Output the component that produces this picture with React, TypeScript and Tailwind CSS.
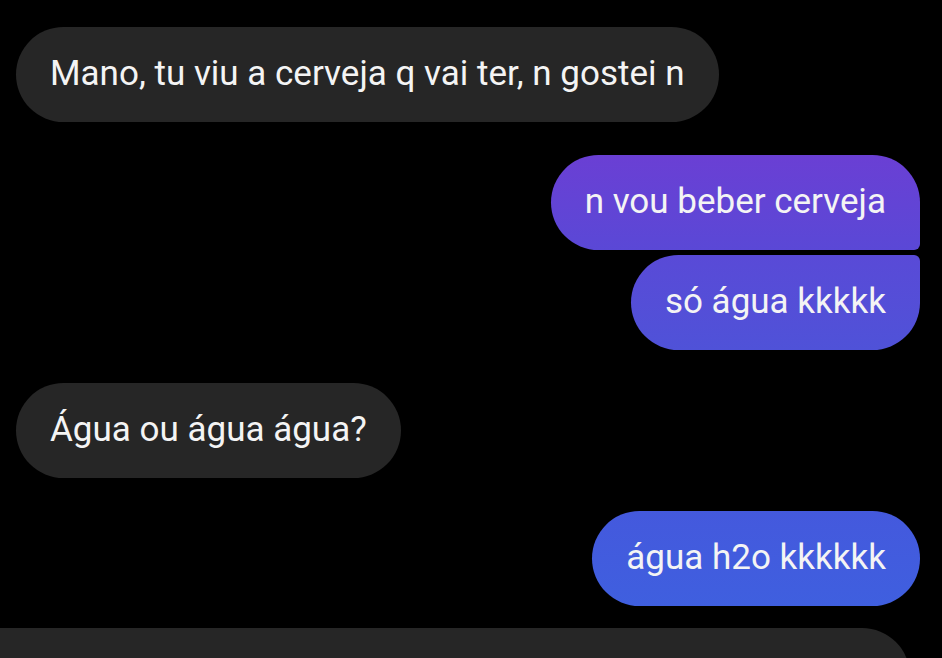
const font = { fontFamily: "Roboto, 'Noto Sans', sans-serif" }

type Msg = { text: string; mine: boolean; shape: string; color: string; top: string }

const messages: Msg[] = [
  { text: "Mano, tu viu a cerveja q vai ter, n gostei n", mine: false, shape: "rounded-[48px]", color: "bg-[#262626]", top: "mt-[27px]" },
  { text: "n vou beber cerveja", mine: true, shape: "rounded-[48px] rounded-br-[6px]", color: "bg-gradient-to-b from-[#6a3fd4] to-[#5a48d6]", top: "mt-[33px]" },
  { text: "só água kkkkk", mine: true, shape: "rounded-[48px] rounded-tr-[6px]", color: "bg-gradient-to-b from-[#594ad7] to-[#4f52d8]", top: "mt-[5px]" },
  { text: "Água ou água água?", mine: false, shape: "rounded-[48px]", color: "bg-[#262626]", top: "mt-[33px]" },
  { text: "água h2o kkkkkk", mine: true, shape: "rounded-[48px]", color: "bg-gradient-to-b from-[#4459dd] to-[#3f5fdf]", top: "mt-[33px]" },
]

export default function App() {
  return (
    <div className="w-[942px] h-[658px] bg-black overflow-hidden flex flex-col" style={font}>
      {messages.map((m, i) => (
        <div key={i} className={`flex ${m.mine ? "justify-end pr-[22px]" : "justify-start pl-[16px]"} ${m.top}`}>
          <div className={`h-[95px] flex items-center px-[34px] text-[35px] text-[#f4f4f4] ${m.shape} ${m.color}`}>
            {m.text}
          </div>
        </div>
      ))}
      <div className="mt-[22px] mr-[32px] h-[120px] bg-[#262626] rounded-tr-[48px] shrink-0" />
    </div>
  )
}
